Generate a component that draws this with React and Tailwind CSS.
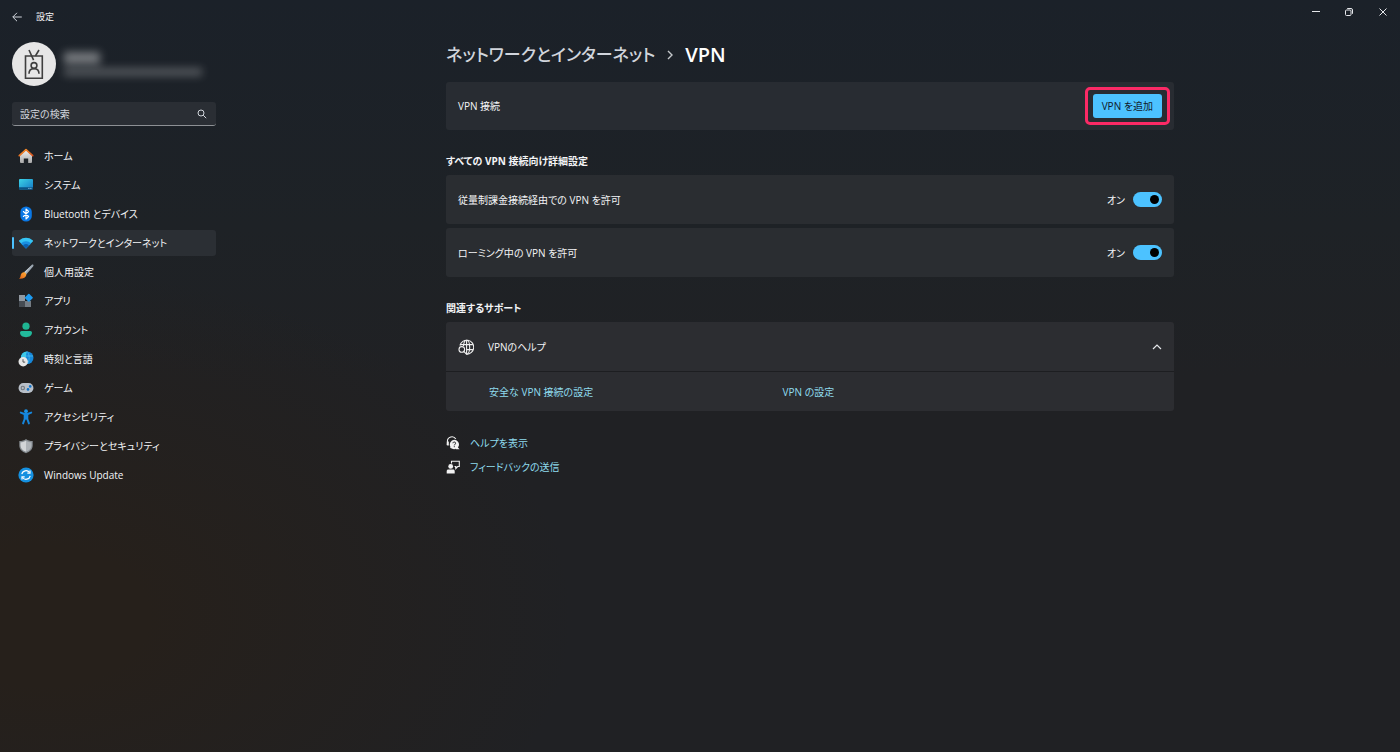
import { useState } from 'react';

function HomeIcon() {
  return (
    <svg viewBox="0 0 16 16" className="w-4 h-4 shrink-0" aria-hidden="true">
      <defs>
        <linearGradient id="homeWall" x1="0" y1="0" x2="0" y2="1">
          <stop offset="0" stopColor="#f1f1f1" />
          <stop offset="1" stopColor="#a9a9a9" />
        </linearGradient>
        <linearGradient id="homeRoof" x1="0" y1="0" x2="1" y2="1">
          <stop offset="0" stopColor="#ff9a2e" />
          <stop offset="1" stopColor="#d4501c" />
        </linearGradient>
      </defs>
      <path d="M2 7.2 8 2l6 5.2V14a1 1 0 0 1-1 1h-2.8v-4.6H5.8V15H3a1 1 0 0 1-1-1z" fill="url(#homeWall)" />
      <path d="M1.300 7.600 8 1.600l6.700 6" fill="none" stroke="url(#homeRoof)" strokeWidth="1.700" strokeLinecap="round" strokeLinejoin="round" />
    </svg>
  );
}

function SystemIcon() {
  return (
    <svg viewBox="0 0 16 16" className="w-4 h-4 shrink-0" aria-hidden="true">
      <defs>
        <linearGradient id="sysScreen" x1="0" y1="0" x2="1" y2="1">
          <stop offset="0" stopColor="#3cd3e6" />
          <stop offset="1" stopColor="#1479c6" />
        </linearGradient>
      </defs>
      <rect x="1" y="2" width="14" height="10.600" rx="1" fill="url(#sysScreen)" />
      <path d="M1 10.200h14v1.400a1 1 0 0 1-1 1H2a1 1 0 0 1-1-1z" fill="#0b5384" />
      <path d="M10.400 11.400h1M12.400 11.400h1" stroke="#bfe9ff" strokeWidth=".9" />
    </svg>
  );
}

function BluetoothIcon() {
  return (
    <svg viewBox="0 0 16 16" className="w-4 h-4 shrink-0" aria-hidden="true">
      <rect x="2.4" y=".4" width="11.4" height="15.2" rx="5.7" fill="#0a78e6" />
      <path d="m5.4 5.5 5.2 5L8 13V3l2.6 2.5-5.2 5" fill="none" stroke="#fff" strokeWidth="1.1" strokeLinejoin="round" strokeLinecap="round" />
    </svg>
  );
}

function NetworkIcon() {
  return (
    <svg viewBox="0 0 16 16" className="w-4 h-4 shrink-0" aria-hidden="true">
      <path d="M8 13.500 1.200 6.600C.8 6.100.9 5.600 1.400 5.200a10.200 10.200 0 0 1 13.200 0c.5.4.6.9.2 1.400z" fill="#35c4f4" />
      <path d="M8 13.500 2.900 8.400a7.200 7.200 0 0 1 10.200 0z" fill="#1a8fe0" />
      <path d="m8 13.500-3-3a4.300 4.300 0 0 1 6 0z" fill="#0c5fae" />
    </svg>
  );
}

function BrushIcon() {
  return (
    <svg viewBox="0 0 16 16" className="w-4 h-4 shrink-0" aria-hidden="true">
      <defs>
        <linearGradient id="brushTip" x1="0" y1="1" x2="1" y2="0">
          <stop offset="0" stopColor="#e35f12" />
          <stop offset="1" stopColor="#ffb13b" />
        </linearGradient>
      </defs>
      <path d="M15.300.8c-.5-.5-1.200-.3-1.700.1L6.200 8.300l2 2.300 6.900-8.100c.4-.5.600-1.200.2-1.700z" fill="#9aa5b0" />
      <path d="M14.300 1 6.200 8.300l.9 1z" fill="#c9d0d6" />
      <path d="M5.400 8.300c1.500-.3 3.200 1 2.900 2.700-.4 2.600-3 3.900-7.300 3.700 1-.6 1.300-1.500 1.600-3 .3-1.600 1.100-3 2.800-3.400z" fill="url(#brushTip)" />
    </svg>
  );
}

function AppsIcon() {
  return (
    <svg viewBox="0 0 16 16" className="w-4 h-4 shrink-0" aria-hidden="true">
      <rect x="1" y="2" width="6" height="6" fill="#9199a1" />
      <rect x="1" y="8" width="6" height="6" fill="#454b52" />
      <rect x="7" y="8" width="6" height="6" fill="#747c84" />
      <rect x="7.700" y="1.700" width="6.200" height="6.200" rx=".8" transform="rotate(45 10.800 4.800)" fill="#1d9bf0" />
    </svg>
  );
}

function AccountIcon() {
  return (
    <svg viewBox="0 0 16 16" className="w-4 h-4 shrink-0" aria-hidden="true">
      <circle cx="8" cy="4.200" r="3.600" fill="#1fb592" />
      <path d="M3.600 9h8.800A1.600 1.600 0 0 1 14 10.600c0 3-2.600 4.600-6 4.600s-6-1.600-6-4.600A1.600 1.600 0 0 1 3.600 9z" fill="#22b99b" />
    </svg>
  );
}

function TimeIcon() {
  return (
    <svg viewBox="0 0 16 16" className="w-4 h-4 shrink-0" aria-hidden="true">
      <circle cx="9.200" cy="6.700" r="6.300" fill="#1687d9" />
      <path d="M9.200.4C5.800.4 2.900 3.200 2.900 6.700c0 1 .2 1.800.5 2.500L8.500 8C7.500 5 8 2.400 9.200.4z" fill="#3ccbe8" />
      <path d="M9.200.4c2.500 3.300 2.700 8.700.2 12.600M3.200 5h12" stroke="#4fc0ee" strokeWidth=".7" fill="none" />
      <circle cx="5.200" cy="10.800" r="4.700" fill="#e6e6e6" />
      <path d="M5 8.200v2.900h2.200" fill="none" stroke="#555" strokeWidth="1" />
    </svg>
  );
}

function GameIcon() {
  return (
    <svg viewBox="0 0 16 16" className="w-4 h-4 shrink-0" aria-hidden="true">
      <rect x=".6" y="3" width="14.800" height="10" rx="4.800" fill="#b8bfc8" />
      <circle cx="4.800" cy="8" r="2.200" fill="#6d747c" />
      <path d="M4.800 6.700v2.600M3.500 8h2.600" stroke="#dfe3e7" strokeWidth=".7" />
      <circle cx="12.200" cy="6.400" r="1.300" fill="#1173c9" />
      <circle cx="10" cy="9.400" r="1.300" fill="#1173c9" />
    </svg>
  );
}

function AccessibilityIcon() {
  return (
    <svg viewBox="0 0 16 16" className="w-4 h-4 shrink-0" aria-hidden="true">
      <circle cx="8" cy="2.200" r="1.900" fill="#1a93e8" />
      <path d="M6 5.500h4v5H6z" fill="#1586dd" />
      <path d="M2.800 3.600 6.300 5h3.400l3.500-1.400M6.700 6v4l-1.600 4.400M9.300 6v4l1.600 4.400" fill="none" stroke="#1586dd" strokeWidth="2" strokeLinecap="round" strokeLinejoin="round" />
    </svg>
  );
}

function ShieldIcon() {
  return (
    <svg viewBox="0 0 16 16" className="w-4 h-4 shrink-0" aria-hidden="true">
      <path d="M8 1c1.800 1.400 4 2.100 6.700 2.100v4.400c0 3.700-2.600 6.200-6.700 7.700-4.100-1.500-6.700-4-6.700-7.700V3.100C4 3.100 6.200 2.400 8 1z" fill="#858b90" />
      <path d="M8 2.400v11.400c-3.500-1.400-5.500-3.400-5.500-6.300V4.200C4.700 4.100 6.500 3.500 8 2.400z" fill="#d2d5d8" />
      <path d="M8 2.400v11.400c3.500-1.400 5.500-3.400 5.500-6.300V4.200C11.300 4.100 9.500 3.500 8 2.400z" fill="#aeb3b8" />
    </svg>
  );
}

function UpdateIcon() {
  return (
    <svg viewBox="0 0 16 16" className="w-4 h-4 shrink-0" aria-hidden="true">
      <circle cx="8" cy="8" r="7.600" fill="#1590e0" />
      <path d="M3.800 7.200A4.300 4.300 0 0 1 11.500 5.500M12.200 8.800a4.300 4.300 0 0 1-7.700 1.700" fill="none" stroke="#fff" strokeWidth="1.200" />
      <path d="M12 3.400v2.700H9.300M4 12.600V9.900h2.700" fill="none" stroke="#fff" strokeWidth="1.200" />
    </svg>
  );
}

function BadgeIcon() {
  return (
    <svg viewBox="0 0 44 44" className="w-11 h-11 shrink-0" aria-hidden="true">
      <circle cx="22" cy="22" r="22" fill="#e6e6e6" />
      <g fill="none" stroke="#3f3f3f" strokeWidth="1.600">
        <path d="M13.500 14h16.800v22.200H13.500z" />
        <path d="m17 8 4.600 10.200M27 8l-3.600 6" />
        <circle cx="22" cy="23.500" r="2.900" />
        <path d="M17 31.800c0-3.200 2-5.200 5-5.200s5 2 5 5.200" />
      </g>
    </svg>
  );
}

function GlobeSearchIcon() {
  return (
    <svg viewBox="0 0 16 16" className="w-4 h-4 shrink-0" fill="none" stroke="#f0f0f0" strokeWidth="1.100" aria-hidden="true">
      <path d="M1.900 6.500A7 7 0 1 1 8.600 15.200" />
      <path d="M5.400 7C5.800 3.600 7 1.200 8.600 1.200c1.700 0 3.100 3.100 3.100 7s-1.400 7-3.100 7" />
      <path d="M2.400 5.600h12.500M8.200 10.600h6.700M8.600 1.200v14" />
      <circle cx="3.800" cy="10.400" r="2.800" />
      <path d="m5.800 12.400 2.600 2.800" strokeLinecap="round" />
    </svg>
  );
}

function GetHelpIcon() {
  return (
    <svg viewBox="0 0 14 14" className="w-[14px] h-[14px] shrink-0" aria-hidden="true">
      <path d="M1.400 7.500V5.300a4.500 4.500 0 0 1 8.400-2.200" fill="none" stroke="#f2f2f2" strokeWidth="1.100" />
      <path d="M1 5.500h1.800v4H1.600A1 1 0 0 1 .6 8.500z" fill="#f2f2f2" />
      <path d="M8.200 3.800a4.700 4.700 0 1 1-2.400 8.700l-1.500-.4v-1.500A4.700 4.700 0 0 1 8.200 3.800zM11.500 11l2.100 2.300h-4z" fill="#f2f2f2" />
      <path d="M6.900 7.200c.1-1.700 2.800-1.600 2.700.1 0 1-1.300 1-1.300 2.100M8.300 10.200v1" fill="none" stroke="#202124" strokeWidth="1" />
    </svg>
  );
}

function FeedbackIcon() {
  return (
    <svg viewBox="0 0 14 14" className="w-[14px] h-[14px] shrink-0" aria-hidden="true">
      <path d="M5.500 3.500V1.300h7.800v5.200h-1.600l-1.900 2v-2H8.500" fill="none" stroke="#f2f2f2" strokeWidth="1.100" />
      <circle cx="4.700" cy="6.400" r="2.400" fill="#f2f2f2" />
      <path d="M.7 13.500v-2.400c0-1 .7-1.600 1.600-1.600h4.800c.9 0 1.600.7 1.600 1.600v2.400z" fill="#f2f2f2" />
    </svg>
  );
}

const navItems = [
  { label: 'ホーム', Icon: HomeIcon },
  { label: 'システム', Icon: SystemIcon },
  { label: 'Bluetooth とデバイス', Icon: BluetoothIcon },
  { label: 'ネットワークとインターネット', Icon: NetworkIcon },
  { label: '個人用設定', Icon: BrushIcon },
  { label: 'アプリ', Icon: AppsIcon },
  { label: 'アカウント', Icon: AccountIcon },
  { label: '時刻と言語', Icon: TimeIcon },
  { label: 'ゲーム', Icon: GameIcon },
  { label: 'アクセシビリティ', Icon: AccessibilityIcon },
  { label: 'プライバシーとセキュリティ', Icon: ShieldIcon },
  { label: 'Windows Update', Icon: UpdateIcon },
];

function TitleBar() {
  return (
    <header className="flex items-start justify-between h-[34px]">
      <div className="flex items-center h-full pl-3">
        <button aria-label="戻る" className="w-6 flex text-gray-300">
          <svg viewBox="0 0 10 10" className="w-[10px] h-[10px]" fill="none" stroke="currentColor" strokeWidth="1">
            <path d="M5 .8.800 5 5 9.200M.8 5h9" />
          </svg>
        </button>
        <span className="text-[9px]">設定</span>
      </div>

      <div className="flex items-center h-6 text-gray-200">
        <button aria-label="最小化" className="w-[33px] h-6 flex items-center justify-center">
          <svg viewBox="0 0 8 8" className="w-2 h-2" stroke="currentColor">
            <path d="M0 3.500h8" />
          </svg>
        </button>
        <button aria-label="元に戻す" className="w-[34px] h-6 flex items-center justify-center">
          <svg viewBox="0 0 8 8" className="w-2 h-2" fill="none" stroke="currentColor">
            <rect x=".5" y="2" width="5.500" height="5.500" rx="1" />
            <path d="M2.200.5h3.800a1.500 1.500 0 0 1 1.500 1.500v3.800" />
          </svg>
        </button>
        <button aria-label="閉じる" className="w-[34px] h-6 flex items-center justify-center">
          <svg viewBox="0 0 8 8" className="w-2 h-2" stroke="currentColor">
            <path d="m.5.5 7 7M7.500.5l-7 7" />
          </svg>
        </button>
      </div>
    </header>
  );
}

function Sidebar({ active, onSelect }) {
  return (
    <aside className="w-[220px] shrink-0 pl-3 pr-1 pt-2">
      <div className="flex items-center gap-2">
        <BadgeIcon />
        <div>
          <div className="w-9 h-3 bg-white/40 blur-[4px]" />
          <div className="w-[138px] h-2 mt-1 bg-white/25 blur-[4px]" />
        </div>
      </div>

      <div className="flex items-center h-6 mt-4 px-2 rounded-[3px] bg-[#2a2e34] border-b border-[#8d9094]">
        <input
          type="text"
          aria-label="設定の検索"
          placeholder="設定の検索"
          className="flex-1 min-w-0 bg-transparent outline-none text-[10px] placeholder:text-gray-300"
        />
        <svg viewBox="0 0 10 10" className="w-[10px] h-[10px] mr-px" fill="none" stroke="#d1d5db" aria-hidden="true">
          <circle cx="4" cy="4" r="3" />
          <path d="m6.200 6.200 3 3" />
        </svg>
      </div>

      <nav className="flex flex-col gap-[3px] mt-[17px]">
        {navItems.map(({ label, Icon }) => (
          <a
            key={label}
            href="#"
            onClick={() => onSelect(label)}
            className={`relative flex items-center gap-[10px] h-[26px] pl-[6px] rounded-[3px] whitespace-nowrap ${
              active === label ? 'bg-[#2b2f34]' : 'hover:bg-white/5'
            }`}
          >
            {active === label && (
              <span className="absolute left-0 top-[7px] w-[2px] h-3 rounded-full bg-[#4cc2ff]" />
            )}
            <Icon />
            <span>{label}</span>
          </a>
        ))}
      </nav>
    </aside>
  );
}

function ToggleRow({ id, label, checked, onChange }) {
  return (
    <div className="flex items-center justify-between h-[49px] px-3 rounded-[3px] bg-[#2a2d31]">
      <label htmlFor={id}>{label}</label>
      <div className="flex items-center gap-2">
        <span>{checked ? 'オン' : 'オフ'}</span>
        <input
          id={id}
          type="checkbox"
          role="switch"
          checked={checked}
          onChange={(e) => onChange(e.target.checked)}
          className="appearance-none flex items-center w-[29px] h-[15px] px-[3px] rounded-full bg-gray-600 checked:bg-[#4cc2ff] checked:justify-end before:w-[9px] before:h-[9px] before:rounded-full before:bg-black"
        />
      </div>
    </div>
  );
}

export default function App() {
  const [active, setActive] = useState('ネットワークとインターネット');
  const [metered, setMetered] = useState(true);
  const [roaming, setRoaming] = useState(true);
  const [helpOpen, setHelpOpen] = useState(true);

  return (
    <div className="min-h-screen text-[10px] leading-4 text-gray-100 font-['Open_Sans','Noto_Sans_CJK_JP',sans-serif] [font-feature-settings:'palt'] bg-[radial-gradient(ellipse_38%_46%_at_3%_82%,#26201b_20%,transparent),linear-gradient(#1b2129,#1e2226_30%,#202124_50%)]">
      <TitleBar />

      <div className="flex">
        <Sidebar active={active} onSelect={setActive} />

        <main className="flex-1 min-w-0 px-6 pt-[6px]">
          <div className="max-w-[728px] mx-auto">
            <h1 className="flex items-center h-[30px] text-xl font-semibold">
              <a href="#" className="text-[17px] font-medium text-gray-300">ネットワークとインターネット</a>
              <svg viewBox="0 0 6 10" className="w-[6px] h-[10px] mx-3" fill="none" stroke="#c4c7cb" strokeWidth="1.400" aria-hidden="true">
                <path d="m1 1 4 4-4 4" />
              </svg>
              <span className="text-white">VPN</span>
            </h1>

            <div className="flex items-center justify-between h-12 mt-3 px-3 rounded-[3px] bg-[#282c32]">
              <span>VPN 接続</span>
              <div className="relative">
                <button className="block h-6 px-[9px] rounded-[3px] bg-[#4cc2ff] text-gray-900">
                  VPN を追加
                </button>
                <span className="absolute -inset-x-2 -inset-y-[7px] rounded-[5px] border-3 border-[#fb2a66] pointer-events-none" />
              </div>
            </div>

            <h2 className="mt-[23px] mb-[6px] font-bold">すべての VPN 接続向け詳細設定</h2>
            <div className="flex flex-col gap-1">
              <ToggleRow id="metered" label="従量制課金接続経由での VPN を許可" checked={metered} onChange={setMetered} />
              <ToggleRow id="roaming" label="ローミング中の VPN を許可" checked={roaming} onChange={setRoaming} />
            </div>

            <h2 className="mt-[23px] mb-[6px] font-bold">関連するサポート</h2>
            <section className="rounded-[3px] bg-[#2c2d31]">
              <button
                onClick={() => setHelpOpen(!helpOpen)}
                aria-expanded={helpOpen}
                className="flex items-center w-full h-[49px] px-3"
              >
                <GlobeSearchIcon />
                <span className="ml-[14px]">VPNのヘルプ</span>
                <svg
                  viewBox="0 0 10 6"
                  className={`w-[10px] h-[6px] ml-auto ${helpOpen ? '' : 'rotate-180'}`}
                  fill="none"
                  stroke="#e5e7eb"
                  strokeWidth="1.200"
                  aria-hidden="true"
                >
                  <path d="m1 5 4-4 4 4" />
                </svg>
              </button>

              {helpOpen && (
                <div className="grid grid-cols-[3fr_4fr] items-center h-10 pl-[43px] border-t border-[#1d1e21] text-[#8fdcee]">
                  <div>
                    <a href="#" className="hover:underline">安全な VPN 接続の設定</a>
                  </div>
                  <div>
                    <a href="#" className="hover:underline">VPN の設定</a>
                  </div>
                </div>
              )}
            </section>

            <div className="flex flex-col items-start gap-2 mt-6 text-[#8fdcee]">
              <a href="#" className="flex items-center gap-[10px] hover:underline">
                <GetHelpIcon />
                ヘルプを表示
              </a>
              <a href="#" className="flex items-center gap-[10px] hover:underline">
                <FeedbackIcon />
                フィードバックの送信
              </a>
            </div>
          </div>
        </main>
      </div>
    </div>
  );
}
